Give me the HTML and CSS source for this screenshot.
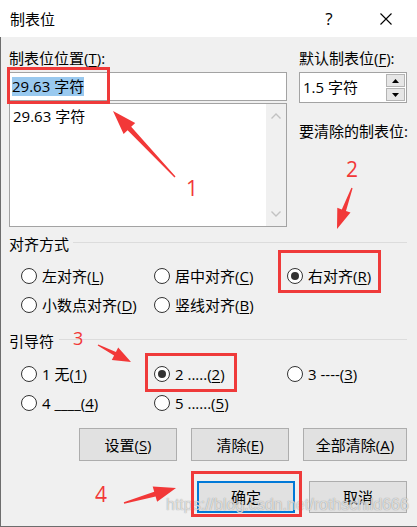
FILE: index.html
```html
<!DOCTYPE html>
<html lang="zh-CN">
<head>
<meta charset="utf-8">
<title>制表位</title>
<link rel="stylesheet" href="styles.css">
</head>
<body>
<div class="titlebar">
  <span class="title">制表位</span>
  <span class="help">?</span>
  <span class="close">
    <svg width="12" height="12" viewBox="0 0 12 12"><path d="M0.5 0.5 L11.5 11.5 M11.5 0.5 L0.5 11.5" stroke="#000" stroke-width="1.1" fill="none"/></svg>
  </span>
</div>
<div class="content">
  <div class="top">
    <div class="left-col">
      <div class="label">制表位位置(<u>T</u>):</div>
      <div class="textbox"><span class="sel">29.63 字符</span></div>
      <div class="listbox">
        <div class="list-items"><div class="item">29.63 字符</div></div>
        <div class="vscroll">
          <svg width="10" height="6" viewBox="0 0 10 6"><polyline points="0.5,5.5 5,1 9.5,5.5" fill="none" stroke="#c2c2c2" stroke-width="1.4"/></svg>
          <svg width="10" height="6" viewBox="0 0 10 6"><polyline points="0.5,0.5 5,5 9.5,0.5" fill="none" stroke="#c2c2c2" stroke-width="1.4"/></svg>
        </div>
      </div>
    </div>
    <div class="right-col">
      <div class="label">默认制表位(<u>F</u>):</div>
      <div class="spin">
        <span class="spin-text">1.5 字符</span>
        <div class="spin-btns">
          <div class="spin-btn"><svg width="7" height="4" viewBox="0 0 7 4"><polygon points="0,4 3.5,0 7,4" fill="#000"/></svg></div>
          <div class="spin-btn"><svg width="7" height="4" viewBox="0 0 7 4"><polygon points="0,0 3.5,4 7,0" fill="#000"/></svg></div>
        </div>
      </div>
      <div class="label clear-label">要清除的制表位:</div>
    </div>
  </div>

  <div class="group-head first"><span>对齐方式</span><span class="rule"></span></div>
  <div class="radio-grid">
    <div class="radio"><span class="dot"></span><span>左对齐(<u>L</u>)</span></div>
    <div class="radio"><span class="dot"></span><span>居中对齐(<u>C</u>)</span></div>
    <div class="radio"><span class="dot on"></span><span>右对齐(<u>R</u>)</span></div>
    <div class="radio"><span class="dot"></span><span>小数点对齐(<u>D</u>)</span></div>
    <div class="radio"><span class="dot"></span><span>竖线对齐(<u>B</u>)</span></div>
  </div>

  <div class="group-head second"><span>引导符</span><span class="rule"></span></div>
  <div class="radio-grid">
    <div class="radio"><span class="dot"></span><span>1 无(<u>1</u>)</span></div>
    <div class="radio"><span class="dot on"></span><span>2 .....(<u>2</u>)</span></div>
    <div class="radio"><span class="dot"></span><span>3 ----(<u>3</u>)</span></div>
    <div class="radio"><span class="dot"></span><span>4 ____(<u>4</u>)</span></div>
    <div class="radio"><span class="dot"></span><span>5 ......(<u>5</u>)</span></div>
  </div>

  <div class="btn-row row1">
    <div class="btn">设置(<u>S</u>)</div>
    <div class="btn">清除(<u>E</u>)</div>
    <div class="btn wide">全部清除(<u>A</u>)</div>
  </div>
  <div class="btn-row row2">
    <div class="btn default">确定</div>
    <div class="btn">取消</div>
  </div>
</div>

<div class="wm">https://blog.csdn.net/rothschild666</div>

<svg class="arrows" width="417" height="527" viewBox="0 0 417 527">
  <polygon fill="#f23838" points="175.5,176.5 131.2,126.8 135.2,123.0 113,111 123.6,134.0 127.6,130.2 174.5,177.5"/>
  <polygon fill="#f23838" points="351.4,187.8 341.8,209.4 337.3,207.8 337,229 350.5,212.6 346.0,211.0 352.6,188.2"/>
  <polygon fill="#f23838" points="97.7,345.5 114.1,355.6 111.8,360.0 131,362 118.2,347.6 115.9,352.0 98.3,344.5"/>
  <polygon fill="#f23838" points="124.2,503.7 155.6,496.5 157.1,501.8 176,488 152.7,486.4 154.2,491.7 123.8,502.3"/>
</svg>

<div class="mark m1"></div>
<div class="mark m2"></div>
<div class="mark m3"></div>
<div class="mark m4"></div>

<div class="num n1">1</div>
<div class="num n2">2</div>
<div class="num n3">3</div>
<div class="num n4">4</div>
</body>
</html>
```

FILE: styles.css
```css
* { box-sizing: border-box; }
html, body { margin: 0; padding: 0; }
body {
  width: 417px;
  height: 527px;
  overflow: hidden;
  position: relative;
  background: #f0f0f0;
  font-family: "Open Sans", "Noto Sans CJK SC", sans-serif;
  font-size: 15px;
  color: #000;
}
u { text-decoration: underline; text-underline-offset: 2px; }

.titlebar {
  height: 37px;
  background: #fff;
  display: flex;
  align-items: center;
  padding-left: 10px;
}
.title { flex: 1; line-height: 20px; padding-top: 1px; }
.help { width: 20px; text-align: center; font-size: 17px; line-height: 20px; }
.close {
  width: 46px;
  height: 37px;
  margin-left: 24px;
  margin-right: 8px;
  display: flex;
  align-items: center;
  justify-content: center;
}

.content {
  height: 490px;
  border-left: 1px solid #6d6d6d;
  border-bottom: 1px solid #6d6d6d;
  padding: 11px 10px 0 8px;
}
.top { display: flex; gap: 12px; }
.left-col { width: 278px; }
.right-col { width: 108px; }
.label { line-height: 20px; white-space: nowrap; }

.textbox {
  margin-top: 4px;
  height: 29px;
  border: 1px solid #a3a3a3;
  background: #fff;
  display: flex;
  align-items: center;
  padding-left: 2px;
}
.sel { background: #99c9ef; line-height: 19px; }

.listbox {
  margin-top: 2px;
  height: 124px;
  border: 1px solid #a3a3a3;
  background: #fff;
  display: flex;
}
.list-items { flex: 1; padding: 2px 0 0 3px; }
.item { line-height: 20px; }
.vscroll {
  width: 20px;
  background: #f0f0f0;
  display: flex;
  flex-direction: column;
  justify-content: space-between;
  align-items: center;
  padding: 9px 0;
}

.spin {
  margin-top: 4px;
  height: 31px;
  border: 1px solid #a3a3a3;
  background: #fff;
  display: flex;
}
.spin-text { flex: 1; padding-left: 3px; line-height: 29px; white-space: nowrap; }
.spin-btns {
  width: 20px;
  padding: 1px 1px 1px 0;
  display: flex;
  flex-direction: column;
  gap: 1px;
}
.spin-btn {
  flex: 1;
  border: 1px solid #b4b4b4;
  background: #e6e6e6;
  display: flex;
  align-items: center;
  justify-content: center;
}
.clear-label { margin-top: 18px; }

.group-head { display: flex; align-items: center; line-height: 20px; }
.group-head.first { margin-top: 7px; }
.group-head.second { margin-top: 12px; }
.rule { flex: 1; height: 1px; background: #dcdcdc; margin-left: 4px; margin-bottom: 4px; }
.second .rule { margin-left: 5px; }

.radio-grid {
  display: grid;
  grid-template-columns: repeat(3, 133px);
  grid-auto-rows: 29px;
  padding-left: 12px;
  margin-top: 7px;
}
.second + .radio-grid { margin-top: 8px; }
.radio { display: flex; align-items: center; gap: 5px; white-space: nowrap; line-height: 20px; }
.dot {
  flex: none;
  width: 16px;
  height: 16px;
  border: 1px solid #333;
  border-radius: 50%;
  background: #fff;
  position: relative;
}
.dot.on::after {
  content: "";
  position: absolute;
  left: 3px;
  top: 3px;
  width: 8px;
  height: 8px;
  border-radius: 50%;
  background: #333;
}

.btn-row { display: flex; justify-content: flex-end; gap: 14px; }
.row1 { margin-top: 11px; }
.row2 { margin-top: 20px; }
.btn {
  width: 98px;
  height: 33px;
  border: 1px solid #adadad;
  background: #e1e1e1;
  display: flex;
  align-items: center;
  justify-content: center;
  line-height: 20px;
  white-space: nowrap;
}
.btn.wide { width: 104px; }
.row2 .btn { height: 32px; }
.btn.default { border: 2px solid #0078d7; }

.wm {
  position: absolute;
  left: 166px;
  top: 497px;
  font-family: "Liberation Sans", sans-serif;
  font-size: 16px;
  line-height: 16px;
  white-space: nowrap;
  color: rgba(255, 255, 255, 0.7);
  text-shadow: 0 0 1px rgba(90, 90, 90, 0.75);
}

.arrows { position: absolute; left: 0; top: 0; pointer-events: none; }

.mark { position: absolute; border: 3px solid #ef3a3a; }
.m1 { left: 7px; top: 67px; width: 103px; height: 37px; }
.m2 { left: 278px; top: 250px; width: 103px; height: 43px; }
.m3 { left: 145px; top: 353px; width: 92px; height: 39px; }
.m4 { left: 191px; top: 471px; width: 111px; height: 46px; }

.num {
  position: absolute;
  color: #f23838;
  font-family: "Open Sans", sans-serif;
  line-height: 1;
}
.n1 { left: 186px; top: 178px; font-size: 21px; }
.n2 { left: 346px; top: 159px; font-size: 21px; }
.n3 { left: 73px; top: 329px; font-size: 18px; }
.n4 { left: 95px; top: 484px; font-size: 21px; }
```
